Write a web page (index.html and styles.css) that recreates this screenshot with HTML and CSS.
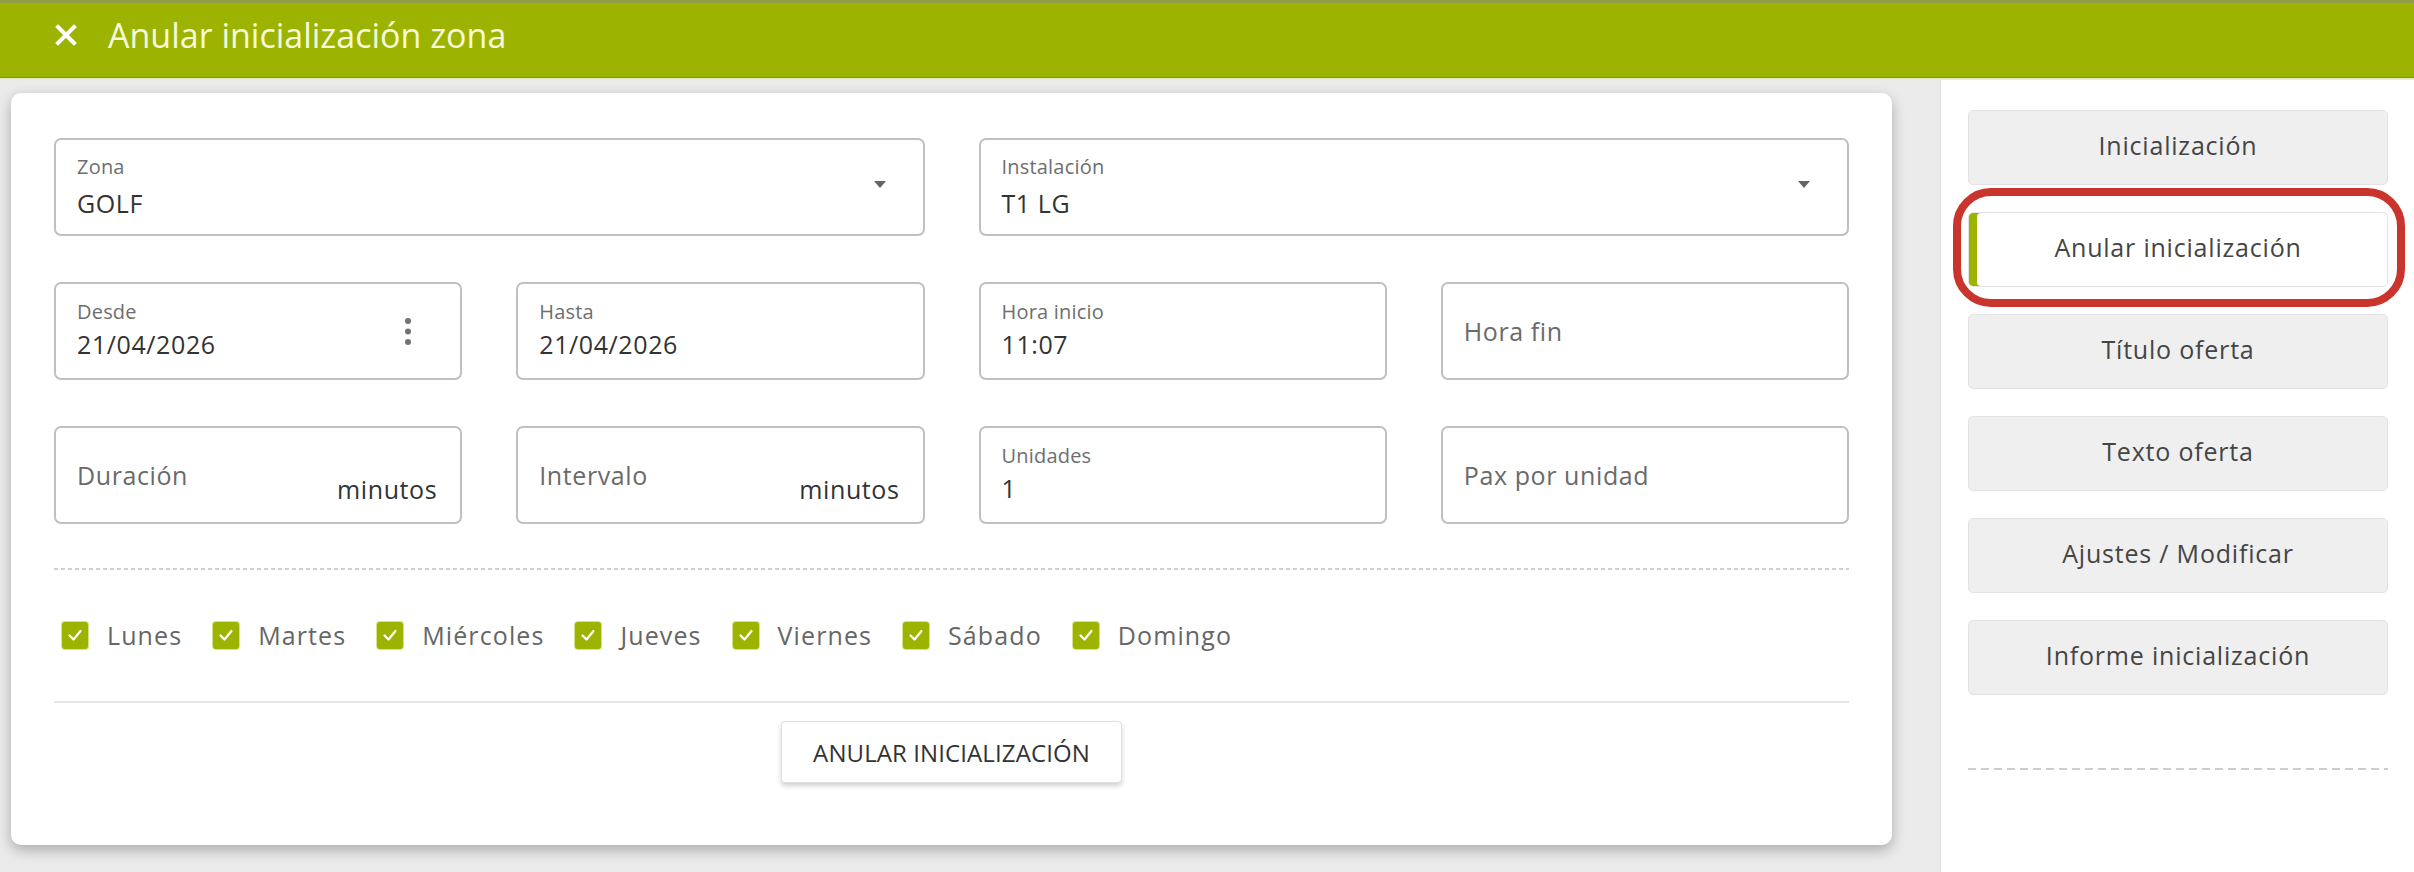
FILE: index.html
```html
<!DOCTYPE html>
<html lang="es">
<head>
<meta charset="utf-8">
<title>Anular inicialización zona</title>
<link rel="stylesheet" href="styles.css">
</head>
<body>
<header class="topbar">
  <svg class="topbar-close" width="22" height="22" viewBox="0 0 22 22" aria-hidden="true">
    <path d="M3 3 L19 19 M19 3 L3 19" stroke="#ffffff" stroke-width="4" stroke-linecap="square" fill="none"/>
  </svg>
  <h1 class="topbar-title">Anular inicialización zona</h1>
</header>

<div class="layout">
  <main class="content">
    <section class="card">
      <div class="fields">
        <div class="field field--wide field--select">
          <div class="field-body">
            <span class="field-label">Zona</span>
            <span class="field-value">GOLF</span>
          </div>
          <span class="caret"></span>
        </div>
        <div class="field field--wide field--select">
          <div class="field-body">
            <span class="field-label">Instalación</span>
            <span class="field-value">T1 LG</span>
          </div>
          <span class="caret"></span>
        </div>

        <div class="field">
          <div class="field-body">
            <span class="field-label">Desde</span>
            <span class="field-value">21/04/2026</span>
          </div>
          <svg class="kebab" width="6" height="27" viewBox="0 0 6 27" aria-hidden="true">
            <circle cx="3" cy="3" r="3" fill="#727272"/>
            <circle cx="3" cy="13.5" r="3" fill="#727272"/>
            <circle cx="3" cy="24" r="3" fill="#727272"/>
          </svg>
        </div>
        <div class="field">
          <div class="field-body">
            <span class="field-label">Hasta</span>
            <span class="field-value">21/04/2026</span>
          </div>
        </div>
        <div class="field">
          <div class="field-body">
            <span class="field-label">Hora inicio</span>
            <span class="field-value">11:07</span>
          </div>
        </div>
        <div class="field">
          <span class="field-placeholder">Hora fin</span>
        </div>

        <div class="field field--suffix">
          <span class="field-placeholder">Duración</span>
          <span class="field-suffix">minutos</span>
        </div>
        <div class="field field--suffix">
          <span class="field-placeholder">Intervalo</span>
          <span class="field-suffix">minutos</span>
        </div>
        <div class="field">
          <div class="field-body">
            <span class="field-label">Unidades</span>
            <span class="field-value">1</span>
          </div>
        </div>
        <div class="field">
          <span class="field-placeholder">Pax por unidad</span>
        </div>
      </div>

      <div class="divider-dashed"></div>

      <div class="days">
        <label class="day"><span class="check"><svg width="18" height="18" viewBox="0 0 18 18"><path d="M3.5 9.5 L7.5 13.5 L14.5 5" stroke="#fff" stroke-width="2.2" fill="none" stroke-linecap="round" stroke-linejoin="round"/></svg></span>Lunes</label>
        <label class="day"><span class="check"><svg width="18" height="18" viewBox="0 0 18 18"><path d="M3.5 9.5 L7.5 13.5 L14.5 5" stroke="#fff" stroke-width="2.2" fill="none" stroke-linecap="round" stroke-linejoin="round"/></svg></span>Martes</label>
        <label class="day"><span class="check"><svg width="18" height="18" viewBox="0 0 18 18"><path d="M3.5 9.5 L7.5 13.5 L14.5 5" stroke="#fff" stroke-width="2.2" fill="none" stroke-linecap="round" stroke-linejoin="round"/></svg></span>Miércoles</label>
        <label class="day"><span class="check"><svg width="18" height="18" viewBox="0 0 18 18"><path d="M3.5 9.5 L7.5 13.5 L14.5 5" stroke="#fff" stroke-width="2.2" fill="none" stroke-linecap="round" stroke-linejoin="round"/></svg></span>Jueves</label>
        <label class="day"><span class="check"><svg width="18" height="18" viewBox="0 0 18 18"><path d="M3.5 9.5 L7.5 13.5 L14.5 5" stroke="#fff" stroke-width="2.2" fill="none" stroke-linecap="round" stroke-linejoin="round"/></svg></span>Viernes</label>
        <label class="day"><span class="check"><svg width="18" height="18" viewBox="0 0 18 18"><path d="M3.5 9.5 L7.5 13.5 L14.5 5" stroke="#fff" stroke-width="2.2" fill="none" stroke-linecap="round" stroke-linejoin="round"/></svg></span>Sábado</label>
        <label class="day"><span class="check"><svg width="18" height="18" viewBox="0 0 18 18"><path d="M3.5 9.5 L7.5 13.5 L14.5 5" stroke="#fff" stroke-width="2.2" fill="none" stroke-linecap="round" stroke-linejoin="round"/></svg></span>Domingo</label>
      </div>

      <div class="divider-solid"></div>

      <div class="actions">
        <button class="btn" type="button">ANULAR INICIALIZACIÓN</button>
      </div>
    </section>
  </main>

  <aside class="sidebar">
    <nav class="side-nav">
      <button class="side-btn" type="button">Inicialización</button>
      <button class="side-btn is-active" type="button">Anular inicialización<span class="highlight-ring"></span></button>
      <button class="side-btn" type="button">Título oferta</button>
      <button class="side-btn" type="button">Texto oferta</button>
      <button class="side-btn" type="button">Ajustes / Modificar</button>
      <button class="side-btn" type="button">Informe inicialización</button>
    </nav>
    <div class="side-divider"></div>
  </aside>
</div>
</body>
</html>
```

FILE: styles.css
```css
* {
  box-sizing: border-box;
}

html,
body {
  margin: 0;
  height: 100%;
}

body {
  background: #ebebeb;
  font-family: "Open Sans", "Noto Sans", sans-serif;
  color: #333;
  overflow: hidden;
}

/* ---------- top bar ---------- */
.topbar {
  height: 80px;
  background: #9db301;
  display: flex;
  align-items: center;
  gap: 31px;
  padding: 0 0 11px 55px;
  box-shadow: inset 0 3px 0 #8f9d47, inset 0 -2px 0 #e6eec4, inset 0 -3px 0 #7f9200;
}

.topbar-close {
  flex: none;
  margin-top: 1px;
}

.topbar-title {
  margin: 0;
  font-size: 34px;
  font-weight: 400;
  line-height: 1;
  color: #f6fadc;
}

/* ---------- layout ---------- */
.layout {
  display: flex;
  height: calc(100% - 80px);
}

.content {
  flex: 1;
  padding: 13px 48px 0 11px;
}

.card {
  background: #fff;
  border-radius: 10px;
  box-shadow: 0 5px 14px rgba(0, 0, 0, 0.28);
  padding: 45px 43px 62px;
}

/* ---------- form fields ---------- */
.fields {
  display: grid;
  grid-template-columns: repeat(4, 1fr);
  gap: 46px 54px;
}

.field {
  display: flex;
  align-items: center;
  height: 98px;
  border: 2px solid #c0c0c0;
  border-radius: 7px;
  padding: 0 37px 0 21px;
  letter-spacing: 0.6px;
}

.field--wide {
  grid-column: span 2;
}

.field-body {
  flex: 1;
  align-self: stretch;
  display: flex;
  flex-direction: column;
  padding-top: 16px;
}

.field-label {
  font-size: 20px;
  line-height: 24px;
  color: #6e6e6e;
  letter-spacing: 0.2px;
}

.field-value {
  font-size: 25px;
  line-height: 30px;
  color: #333;
  margin-top: 5px;
}

.field--select .field-value {
  margin-top: 9px;
}

.field--select .field-body {
  padding-top: 15px;
}

.field-placeholder {
  font-size: 25px;
  line-height: 30px;
  color: #6a6a6a;
}

.field--suffix {
  padding-right: 23px;
}

.field-suffix {
  margin-left: auto;
  align-self: flex-end;
  margin-bottom: 18px;
  font-size: 25px;
  line-height: 30px;
  color: #333;
}

.caret {
  flex: none;
  width: 0;
  height: 0;
  border-left: 6.5px solid transparent;
  border-right: 6.5px solid transparent;
  border-top: 7px solid #666;
  margin-top: -5px;
}

.kebab {
  flex: none;
  margin-right: 12px;
}

/* ---------- dividers ---------- */
.divider-dashed {
  margin-top: 44px;
  height: 2px;
  background: repeating-linear-gradient(90deg, #d0d0d0 0 4px, transparent 4px 7px);
}

.divider-solid {
  margin-top: 51px;
  height: 2px;
  background: #e6e6e6;
}

/* ---------- weekdays ---------- */
.days {
  display: flex;
  gap: 31px;
  padding-left: 8px;
  margin-top: 50px;
}

.day {
  display: flex;
  align-items: center;
  gap: 19px;
  font-size: 25px;
  line-height: 30px;
  color: #666;
  letter-spacing: 1.1px;
}

.check {
  width: 26px;
  height: 27px;
  border-radius: 3px;
  background: #9cb400;
  display: grid;
  place-items: center;
  box-shadow: 0 0 0 1px #d8e48a;
}

.check svg {
  display: block;
}

/* ---------- action ---------- */
.actions {
  display: flex;
  justify-content: center;
  margin-top: 18px;
}

.btn {
  width: 341px;
  height: 62px;
  background: #fff;
  border: 1px solid #e0e0e0;
  border-radius: 4px;
  box-shadow: 0 3px 5px rgba(0, 0, 0, 0.18);
  font-family: inherit;
  font-size: 24px;
  color: #333;
  letter-spacing: 0.1px;
  padding: 0;
}

/* ---------- sidebar ---------- */
.sidebar {
  width: 474px;
  flex: none;
  background: #fff;
  border-left: 1px solid #dedede;
  padding: 30px 26px 0 27px;
}

.side-nav {
  display: flex;
  flex-direction: column;
  gap: 27px;
}

.side-btn {
  position: relative;
  height: 75px;
  background: #efefef;
  border: 1px solid #e3e3e3;
  border-radius: 5px;
  font-family: inherit;
  font-size: 25px;
  letter-spacing: 0.8px;
  color: #454545;
  padding: 0 0 6px;
}

.side-btn.is-active {
  background: #fff;
  box-shadow: inset 8px 0 0 #9cb400;
}

.highlight-ring {
  position: absolute;
  top: -25px;
  right: -18px;
  bottom: -21px;
  left: -16px;
  border: 8px solid #c9342c;
  border-radius: 38px;
  pointer-events: none;
}

.side-divider {
  margin-top: 73px;
  height: 2px;
  background: repeating-linear-gradient(90deg, #cdcdcd 0 8px, transparent 8px 13px);
}
```
